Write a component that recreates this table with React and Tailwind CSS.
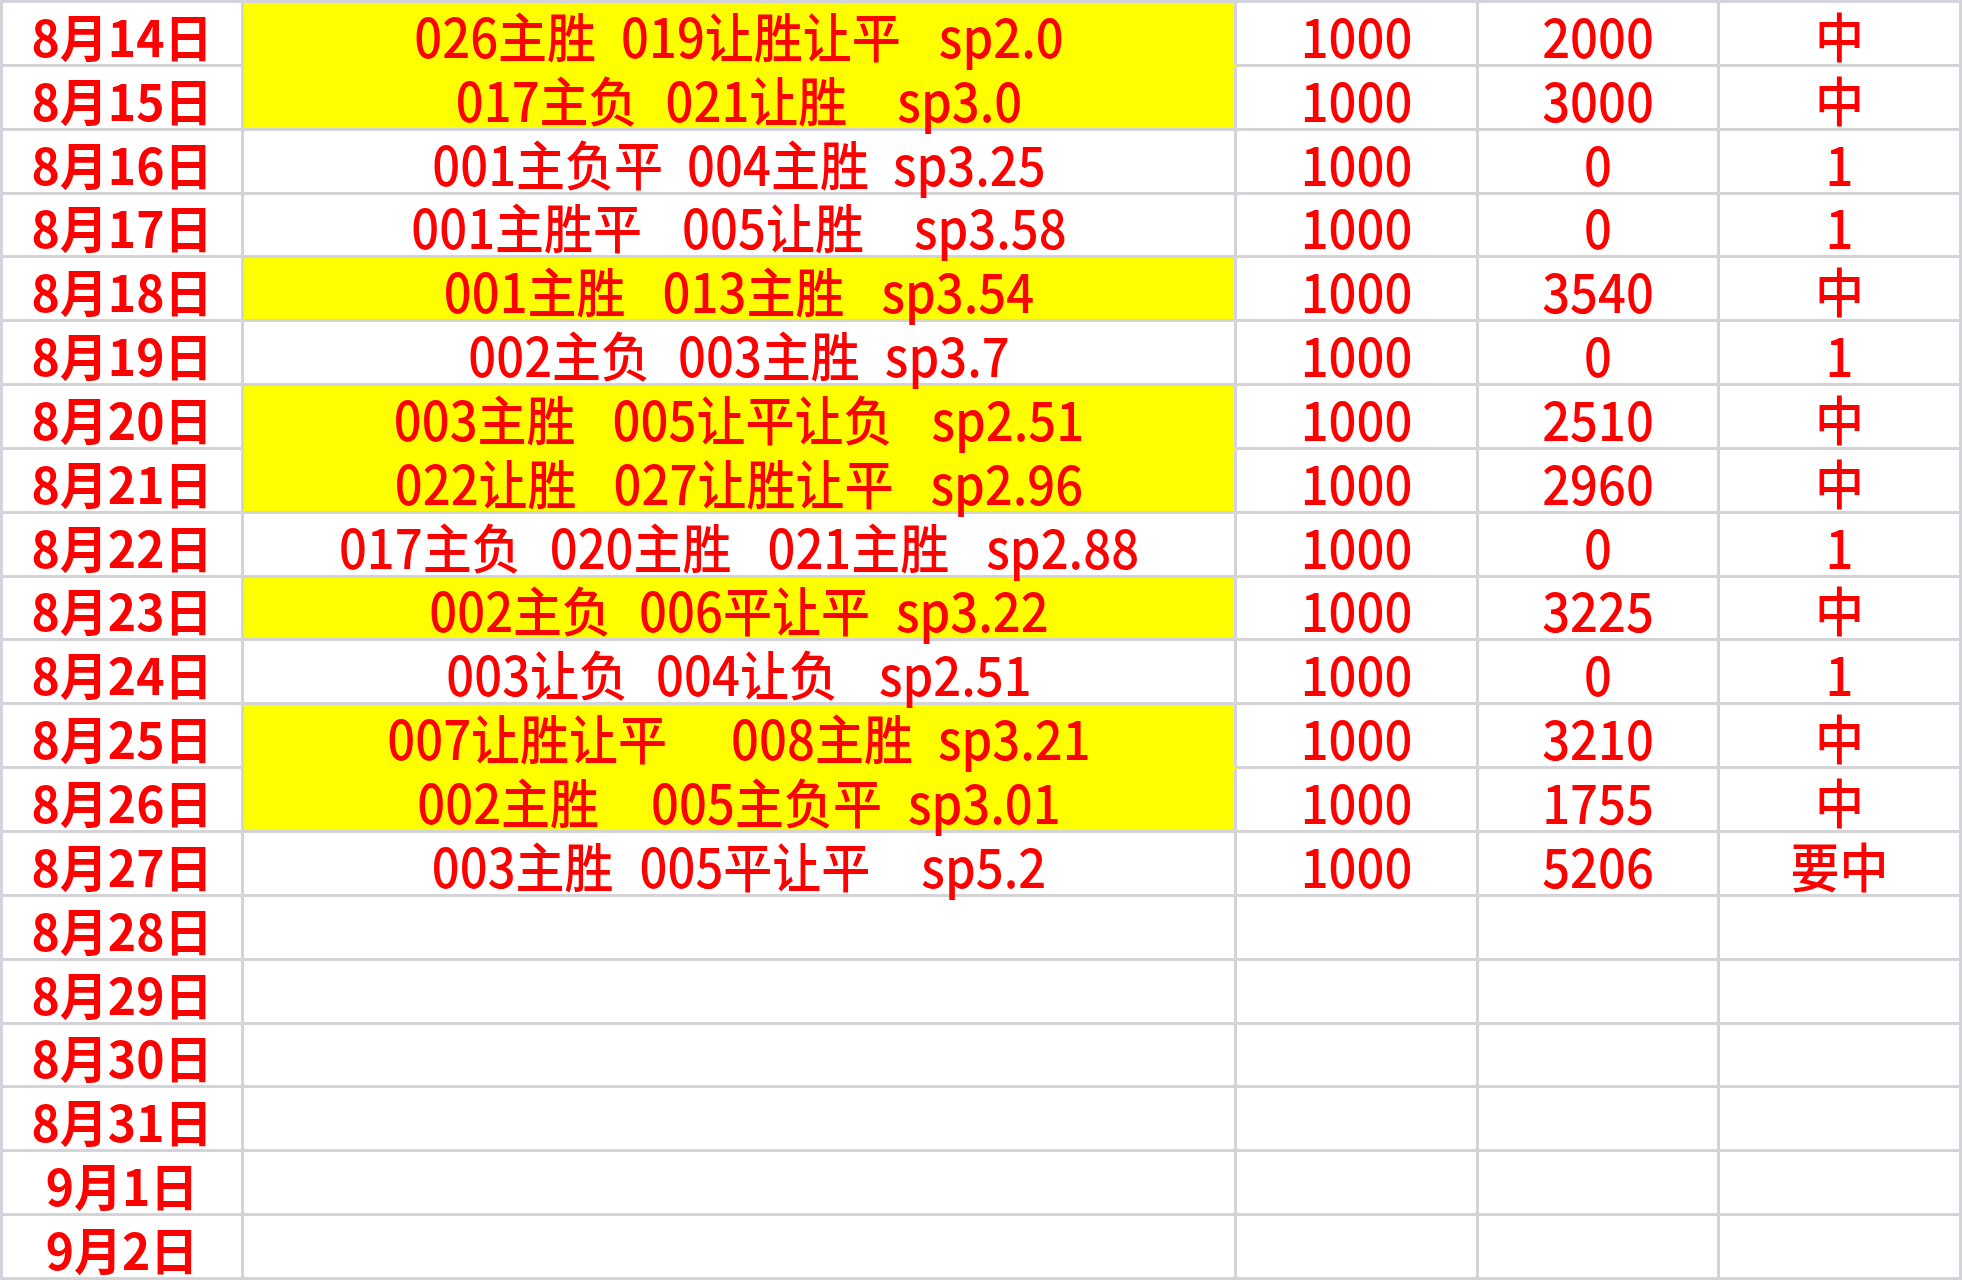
import React from "react";

// 每行: 日期, 选择(分段+间距), 投入, 回报, 结果, 是否黄底
const rows = [
  { date: "8月14日", picks: [["026主胜", ""], ["019让胜让平", "ml-[25px]"], ["sp2.0", "ml-[38px]"]], bet: "1000", ret: "2000", res: "中", hl: true },
  { date: "8月15日", picks: [["017主负", ""], ["021让胜", "ml-[28px]"], ["sp3.0", "ml-[50px]"]], bet: "1000", ret: "3000", res: "中", hl: true },
  { date: "8月16日", picks: [["001主负平", ""], ["004主胜", "ml-[24px]"], ["sp3.25", "ml-[24px]"]], bet: "1000", ret: "0", res: "1" },
  { date: "8月17日", picks: [["001主胜平", ""], ["005让胜", "ml-[40px]"], ["sp3.58", "ml-[50px]"]], bet: "1000", ret: "0", res: "1" },
  { date: "8月18日", picks: [["001主胜", ""], ["013主胜", "ml-[37px]"], ["sp3.54", "ml-[37px]"]], bet: "1000", ret: "3540", res: "中", hl: true },
  { date: "8月19日", picks: [["002主负", ""], ["003主胜", "ml-[28px]"], ["sp3.7", "ml-[25px]"]], bet: "1000", ret: "0", res: "1" },
  { date: "8月20日", picks: [["003主胜", ""], ["005让平让负", "ml-[37px]"], ["sp2.51", "ml-[39px]"]], bet: "1000", ret: "2510", res: "中", hl: true },
  { date: "8月21日", picks: [["022让胜", ""], ["027让胜让平", "ml-[37px]"], ["sp2.96", "ml-[37px]"]], bet: "1000", ret: "2960", res: "中", hl: true },
  { date: "8月22日", picks: [["017主负", ""], ["020主胜", "ml-[29px]"], ["021主胜", "ml-[36px]"], ["sp2.88", "ml-[37px]"]], bet: "1000", ret: "0", res: "1" },
  { date: "8月23日", picks: [["002主负", ""], ["006平让平", "ml-[28px]"], ["sp3.22", "ml-[26px]"]], bet: "1000", ret: "3225", res: "中", hl: true },
  { date: "8月24日", picks: [["003让负", ""], ["004让负", "ml-[28px]"], ["sp2.51", "ml-[41px]"]], bet: "1000", ret: "0", res: "1" },
  { date: "8月25日", picks: [["007让胜让平", ""], ["008主胜", "ml-[64px]"], ["sp3.21", "ml-[25px]"]], bet: "1000", ret: "3210", res: "中", hl: true },
  { date: "8月26日", picks: [["002主胜", ""], ["005主负平", "ml-[52px]"], ["sp3.01", "ml-[26px]"]], bet: "1000", ret: "1755", res: "中", hl: true },
  { date: "8月27日", picks: [["003主胜", ""], ["005平让平", "ml-[26px]"], ["sp5.2", "ml-[51px]"]], bet: "1000", ret: "5206", res: "要中" },
  { date: "8月28日" },
  { date: "8月29日" },
  { date: "8月30日" },
  { date: "8月31日" },
  { date: "9月1日" },
  { date: "9月2日" },
];

const cell = "flex items-end justify-center pb-[4px] border-r-[3px] border-b-[3px] border-[#d4d4d8]";
const txt = "text-[49px] leading-[50px] font-medium scale-y-[1.1]";

export default function App() {
  return (
    <div className="w-[1962px] h-[1280px] overflow-hidden bg-white border-t-[3px] border-l-[3px] border-[#d4d4dc] font-['Noto_Sans_CJK_SC','Noto_Sans_CJK_JP',sans-serif] text-[#ff0000] whitespace-pre">
      <div className="grid h-full grid-cols-[241px_993px_242px_241px_1fr] grid-rows-[repeat(20,minmax(0,1fr))]">
        {rows.map((r, i) => {
          const nextHl = rows[i + 1] && rows[i + 1].hl;
          const midCls = r.hl
            ? nextHl
              ? "bg-[#ffff00] border-b-[#ffff00]"
              : "bg-[#ffff00]"
            : "";
          return (
            <React.Fragment key={r.date}>
              <div className={cell}>
                <span className="text-[48px] leading-[50px] font-bold scale-y-[1.05]">{r.date}</span>
              </div>
              <div className={`${cell} ${midCls}`}>
                {r.picks && (
                  <span className={`${txt} flex`}>
                    {r.picks.map(([t, m]) => (
                      <span key={t} className={m}>
                        {t}
                      </span>
                    ))}
                  </span>
                )}
              </div>
              <div className={cell}>
                <span className={txt}>{r.bet}</span>
              </div>
              <div className={cell}>
                <span className={txt}>{r.ret}</span>
              </div>
              <div className={cell}>
                <span className={txt}>{r.res}</span>
              </div>
            </React.Fragment>
          );
        })}
      </div>
    </div>
  );
}
